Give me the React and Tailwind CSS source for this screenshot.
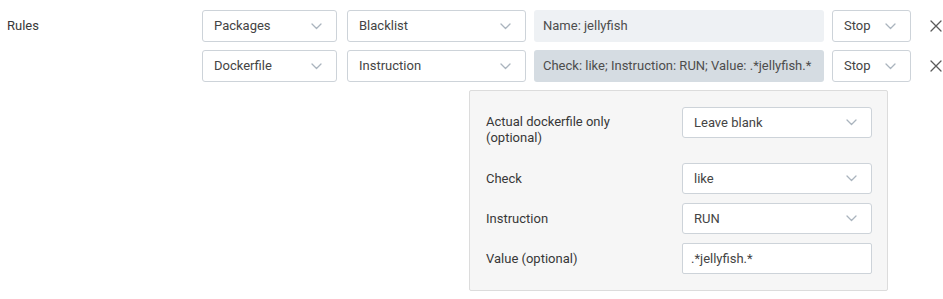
const Chevron = () => (
  <svg className="w-[11px] h-[7px] text-[#aab4be]" viewBox="0 0 11 7" fill="none" stroke="currentColor">
    <path strokeWidth={1.3} strokeLinecap="round" strokeLinejoin="round" d="M1 1l4.5 4.5L10 1" />
  </svg>
);

const Select = ({ value, className = '' }) => (
  <div className={`flex items-center justify-between pl-[11px] pr-[14px] bg-white border border-[#cdd3d9] rounded-[3px] text-[13px] text-[#444] ${className}`}>
    <span>{value}</span>
    <Chevron />
  </div>
);

const Summary = ({ text, dark }) => (
  <div className={`flex items-center pl-[9px] w-[290px] h-[32px] rounded-[3px] text-[13px] text-[#4d4d4d] ${dark ? 'bg-[#d5dce2]' : 'bg-[#eef1f4]'}`}>
    {text}
  </div>
);

const RuleRow = ({ source, kind, summary, dark }) => (
  <div className="flex items-center h-[32px]">
    <Select value={source} className="w-[135px] h-[32px] shrink-0" />
    <Select value={kind} className="w-[179px] h-[32px] ml-[10px] shrink-0" />
    <div className="ml-[8px] shrink-0">
      <Summary text={summary} dark={dark} />
    </div>
    <Select value="Stop" className="w-[79px] h-[32px] ml-[8px] shrink-0" />
    <button className="ml-[19px] text-[#5a5a5a] shrink-0">
      <svg className="w-[12px] h-[12px]" viewBox="0 0 12 12" fill="none" stroke="currentColor">
        <path strokeWidth={1.3} strokeLinecap="round" d="M1 1l10 10M11 1L1 11" />
      </svg>
    </button>
  </div>
);

export default function App() {
  return (
    <div className="min-h-screen bg-white pt-[10px] font-['Roboto',sans-serif]">
      <div className="flex">
        <div className="w-[202px] shrink-0 pl-[7px] h-[32px] flex items-center text-[13px] text-[#383838]">Rules</div>
        <div className="flex flex-col gap-[8px] shrink-0">
          <RuleRow source="Packages" kind="Blacklist" summary="Name: jellyfish" />
          <RuleRow source="Dockerfile" kind="Instruction" summary="Check: like; Instruction: RUN; Value: .*jellyfish.*" dark />

          <div className="ml-[267px] w-[419px] bg-[#f6f6f6] border border-[#dcdcdc] rounded-[2px] pl-[16px] pr-[15px] pt-[16px] pb-[16px]">
            <div className="flex items-start mb-[17px]">
              <div className="w-[196px] pt-[7px] text-[13px] leading-[16px] text-[#383838]">
                Actual dockerfile only<br />(optional)
              </div>
              <Select value="Leave blank" className="w-[190px] h-[31px]" />
            </div>
            <div className="flex flex-col gap-[9px]">
              <div className="flex items-center">
                <div className="w-[196px] text-[13px] text-[#383838]">Check</div>
                <Select value="like" className="w-[190px] h-[31px]" />
              </div>
              <div className="flex items-center">
                <div className="w-[196px] text-[13px] text-[#383838]">Instruction</div>
                <Select value="RUN" className="w-[190px] h-[31px]" />
              </div>
              <div className="flex items-center">
                <div className="w-[196px] text-[13px] text-[#383838]">Value (optional)</div>
                <input
                  defaultValue=".*jellyfish.*"
                  className="w-[190px] h-[31px] px-[8px] bg-white border border-[#cdd3d9] rounded-[2px] text-[13px] text-[#444] outline-none"
                />
              </div>
            </div>
          </div>
        </div>
      </div>
    </div>
  );
}
